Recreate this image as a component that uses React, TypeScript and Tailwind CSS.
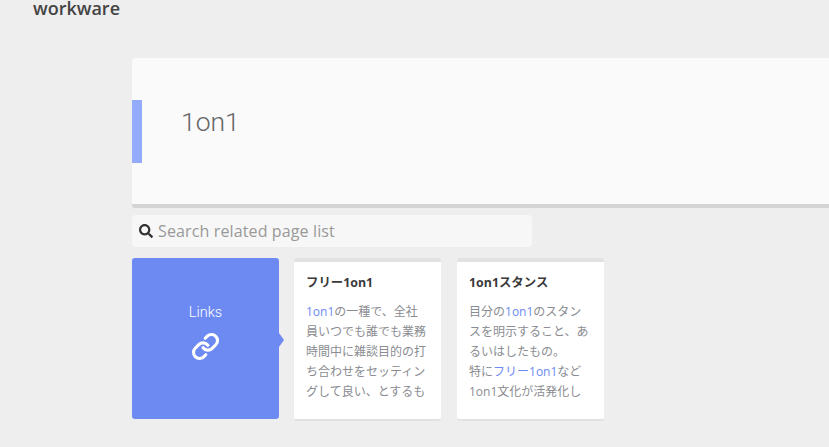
import { Link } from "lucide-react";
import { FaSearch } from "react-icons/fa";

const CJK = "font-['Open_Sans','Noto_Sans_CJK_JP',sans-serif]";

const Hl = ({ children }: { children: React.ReactNode }) => <span className="text-[#6d8af2]">{children}</span>;

function Card({ title, children }: { title: string; children: React.ReactNode }) {
  return (
    <div className="w-[147px] h-[163px] bg-white rounded-[3px] border-t-[4px] border-b-[2px] border-[#e2e2e2] px-3 overflow-hidden">
      <div className="mt-[12px] h-[18px] leading-[18px] text-[12.4px] font-bold text-[#3a3a3a] whitespace-nowrap">{title}</div>
      <div className="mt-[10px] text-[12px] leading-[20px] text-[#8a8c91]">{children}</div>
    </div>
  );
}

export default function App() {
  return (
    <div className={`w-[829px] h-[447px] bg-[#eeeeee] overflow-hidden ${CJK}`}>
      <div className="h-[58px] pl-[33px]">
        <div className="text-[18px] leading-[16px] font-semibold text-[#444]">workware</div>
      </div>
      <div className="ml-[132px] w-[720px]">
        <div className="relative h-[150px] bg-[#fafafa] rounded-[3px] border-b-[4px] border-[#d4d4d4] flex items-center">
          <div className="absolute left-0 top-[42px] w-[10px] h-[63px] bg-[#94abfb]" />
          <h1 className="pl-[49px] pb-[19px] text-[26.5px] font-light font-['Roboto'] text-[#666]">1on1</h1>
        </div>
        <div className="mt-[7px] w-[400px] h-[32px] bg-[#f7f7f7] rounded-[4px] flex items-center pl-[7px]">
          <FaSearch size={14} className="text-[#333]" />
          <span className="ml-[5px] text-[16px] tracking-[0.13px] text-[#999]">Search related page list</span>
        </div>
        <div className="mt-[11px] flex">
          <div className="relative w-[147px] h-[161px] bg-[#6d8af2] rounded-[3px] flex flex-col items-center pt-[46px] text-white">
            <span className="text-[14.5px] leading-[18px] font-light font-['Roboto']">Links</span>
            <Link size={29} strokeWidth={2.6} className="mt-[10px]" />
            <div className="absolute right-[-5px] top-[75px] w-0 h-0 border-y-[7px] border-y-transparent border-l-[5px] border-l-[#6d8af2]" />
          </div>
          <div className="ml-[15px]">
            <Card title="フリー1on1">
              <Hl>1on1</Hl>の一種で、全社員いつでも誰でも業務時間中に雑談目的の打ち合わせをセッティングして良い、とするも
            </Card>
          </div>
          <div className="ml-[16px]">
            <Card title="1on1スタンス">
              目分の<Hl>1on1</Hl>のスタンスを明示すること、あるいはしたもの。<br />特に<Hl>フリー1on1</Hl>など1on1文化が活発化し
            </Card>
          </div>
        </div>
      </div>
    </div>
  );
}
